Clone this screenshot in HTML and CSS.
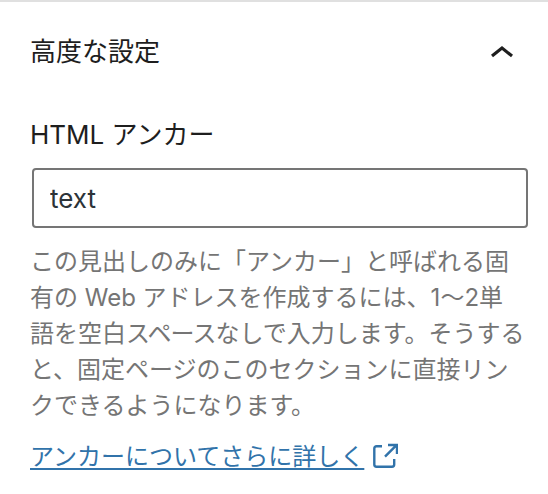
FILE: index.html
```html
<!DOCTYPE html>
<html lang="ja">
<head>
  <meta charset="UTF-8">
  <meta name="viewport" content="width=device-width, initial-scale=1.0">
  <title>高度な設定</title>
  <link rel="stylesheet" href="styles.css">
</head>

<body>
<div class="panel">
  <div class="panel-header">
    <h2>高度な設定</h2>
    <svg class="chevron" viewBox="0 0 24 24" width="48" height="48">
      <path d="M6.500 12.400L12 8l5.500 4.400-1 1.200L12 10l-4.500 3.600-1-1.200z" />
    </svg>
  </div>

  <label class="label" for="anchor">HTML アンカー</label>
  <input class="text-input" type="text" id="anchor" value="text" />

  <p class="help">
    <span class="line">この見出しのみに「アンカー」と呼ばれる固</span>
    <span class="line">有の Web アドレスを作成するには、1〜2単</span>
    <span class="line">語を空白<span class="tight">スペース</span>なしで入力します。そうする</span>
    <span class="line">と、固定ページのこのセクションに直接リン</span>
    <span class="line">クできるようになります。</span>
  </p>

  <a class="link" href="#">
    <span>アンカーについてさらに詳しく</span>
    <svg class="external" viewBox="0 0 26 26" width="26" height="26">
      <path d="M10 3.300H4.500A2.200 2.200 0 0 0 2.300 5.500V21.500A2.200 2.200 0 0 0 4.500 23.700H20A2.200 2.200 0 0 0 22.200 21.500V16M16 2H25V11M24 2.600L13 13.600" />
    </svg>
  </a>
</div>
</body>
</html>
```

FILE: styles.css
```css
* {
    box-sizing: border-box;
    padding: 0;
    margin: 0;
}

body {
    background: #ffffff;
    color: #1e1e1e;
    font-family: Inter, "Noto Sans CJK JP", sans-serif;
    font-size: 26px;
}

.panel {
    height: 494px;
    border-top: 2px solid #e0e0e0;
    padding: 25px 20px 0 30px;
    overflow: hidden;
}

.panel-header {
    display: flex;
    align-items: center;
    justify-content: space-between;
    height: 48px;
    padding-right: 2px;
}

h2 {
    font-size: 26px;
    font-weight: 400;
    line-height: 48px;
    padding-top: 2px;
}

.chevron {
    fill: #1e1e1e;
    margin-top: 6px;
}

.label {
    display: block;
    margin-top: 40px;
    line-height: 40px;
}

.text-input {
    display: block;
    width: 496px;
    height: 60px;
    margin: 13px 0 0 2px;
    padding: 0 16px;
    border: 2px solid #757575;
    border-radius: 4px;
    font-family: inherit;
    font-size: 26px;
    color: #2c3338;
}

.help {
    margin-top: 16px;
    color: #757575;
    font-size: 24px;
    line-height: 36px;
}

.line {
    display: block;
    white-space: nowrap;
}

.tight {
    letter-spacing: -0.9px;
}

.link {
    display: flex;
    align-items: center;
    gap: 8px;
    margin-top: 15px;
    color: #3173aa;
    font-size: 24px;
    line-height: 36px;
    text-decoration-thickness: 2px;
    text-underline-offset: 3px;
}

.external {
    fill: none;
    stroke: #3173aa;
    stroke-width: 2.4;
    margin-bottom: 2px;
}
```
